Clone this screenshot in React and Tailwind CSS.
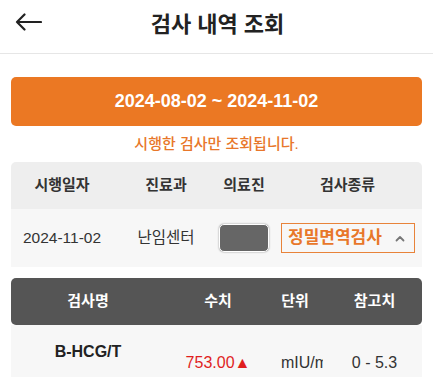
import React from 'react';

const font = { fontFamily: '"Liberation Sans", "Noto Sans CJK KR", sans-serif' };

const BackArrow = () => (
  <svg width="27" height="18" viewBox="0 0 27 18" fill="none" stroke="#222" strokeWidth="2.2" strokeLinecap="round" strokeLinejoin="round">
    <path d="M26 9H2M9.5 1.5L2 9l7.5 7.5" />
  </svg>
);

const ChevronUp = () => (
  <svg width="10" height="7" viewBox="0 0 10 7" fill="none" stroke="#777" strokeWidth="1.8" strokeLinecap="round" strokeLinejoin="round">
    <path d="M1.5 5.5L5 2l3.5 3.5" />
  </svg>
);

export default function App() {
  return (
    <div className="w-[433px] h-[377px] overflow-hidden bg-white text-[#333]" style={font}>
      {/* top bar */}
      <div className="relative h-[54px] border-b border-[#e6e6e6] flex items-center justify-center">
        <button className="absolute left-[15px] top-[13px]">
          <BackArrow />
        </button>
        <h1 className="text-[22px] font-bold text-[#222] -mt-[4px] ml-[2px]">검사 내역 조회</h1>
      </div>

      <div className="px-[11px] pt-[23px]">
        <div className="h-[49px] rounded-[5px] bg-[#eb7823] flex items-center justify-center text-white text-[18px] font-bold">
          2024-08-02 ~ 2024-11-02
        </div>

        <div className="h-[36px] flex items-center justify-center text-[15px] font-medium text-[#e8772a]">
          시행한 검사만 조회됩니다.
        </div>

        {/* visit list */}
        <div className="grid grid-cols-[102px_106px_50px_157px] h-[47px] items-center bg-[#eeeeee] rounded-t-[5px] text-[15px] font-semibold text-[#333]">
          <span className="text-center">시행일자</span>
          <span className="text-center">진료과</span>
          <span className="text-center">의료진</span>
          <span className="text-center">검사종류</span>
        </div>
        <div className="grid grid-cols-[102px_106px_50px_157px] h-[58px] items-center bg-[#f7f7f7] text-[15.5px] text-[#333]">
          <span className="text-center">2024-11-02</span>
          <span className="text-center">난임센터</span>
          <div className="h-[28px] w-[50px] rounded-[5px] bg-[#666] border-[1.5px] border-white shadow-[0_0_2px_rgba(0,0,0,0.45)]" />
          <div className="pl-[12px] pr-[11px]">
            <div className="h-[30px] border-[1.5px] border-[#e8833a] flex items-center justify-between pl-[6px] pr-[9px]">
              <span className="text-[17px] font-semibold text-[#e8772a]">정밀면역검사</span>
              <ChevronUp />
            </div>
          </div>
        </div>

        {/* result list */}
        <div className="mt-[11px] grid grid-cols-[154px_106px_52px_103px] h-[47px] items-center bg-[#555555] rounded-[5px] text-[15px] font-semibold text-white">
          <span className="text-center">검사명</span>
          <span className="text-center">수치</span>
          <span className="text-center -ml-[4px]">단위</span>
          <span className="text-center">참고치</span>
        </div>
        <div className="grid grid-cols-[154px_106px_52px_103px] h-[70px] bg-[#f7f7f7] text-[16px]">
          <div className="pt-[15px] text-center font-bold text-[#222]">B-HCG/T</div>
          <div className="pt-[26px] text-center text-[#e01e1e]">753.00▲</div>
          <div className="pt-[26px] pl-[10px] overflow-hidden whitespace-nowrap text-[#333]">mIU/mL</div>
          <div className="pt-[26px] text-center text-[#333]">0 - 5.3</div>
        </div>
      </div>
    </div>
  );
}
